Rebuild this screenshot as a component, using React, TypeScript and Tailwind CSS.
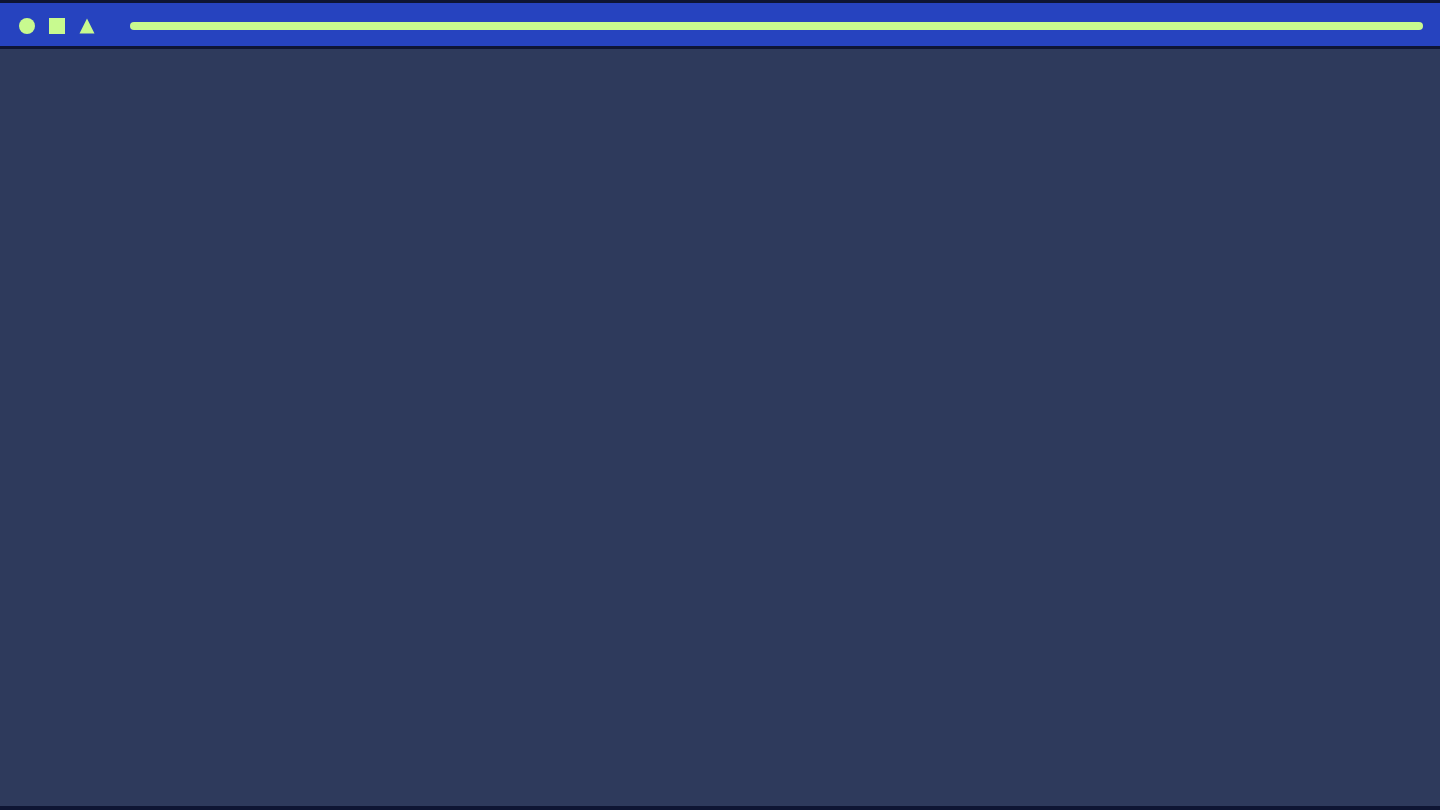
export default function App() {
  return (
    <div className="w-[1440px] h-[810px] flex flex-col bg-[#2e3a5c] border-t-[3px] border-b-[4px] border-[#0e1533]">
      {/* Top bar */}
      <header className="h-[46px] shrink-0 flex items-center bg-[#2643bf] border-b-[3px] border-[#0e1533] pt-[3px] pl-[19px] pr-[17px]">
        <div className="flex items-center gap-[14px]">
          <span className="block w-4 h-4 rounded-full bg-[#c8fa8f]" />
          <span className="block w-4 h-4 bg-[#c8fa8f]" />
          <svg width="16" height="16" viewBox="0 0 16 16" className="block">
            <polygon points="8,0.5 15.5,15.5 0.5,15.5" fill="#c8fa8f" />
          </svg>
        </div>
        <div className="ml-[35px] flex-1 h-2 rounded-full bg-[#c8fa8f]" />
      </header>
      {/* Body */}
      <main className="flex-1" />
    </div>
  )
}
